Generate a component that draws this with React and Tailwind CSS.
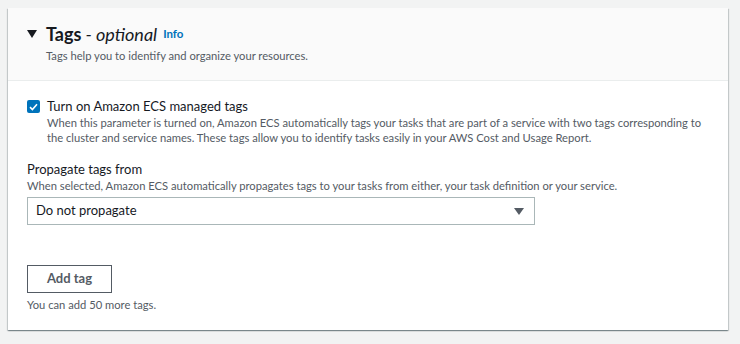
export default function App() {
  return (
    <div className="min-h-[344px] w-[740px] bg-[#f2f3f3] pt-2 pl-2 font-['Lato',sans-serif] text-[#16191f]">
      <div className="w-[720px] bg-white shadow-[0_1px_1px_0_rgba(0,28,36,0.3),1px_1px_1px_0_rgba(0,28,36,0.15),-1px_1px_1px_0_rgba(0,28,36,0.15)]">
        <div className="h-[73px] border-b border-[#eaeded] bg-[#fafafa] pl-[19px] pt-[14px]">
          <div className="flex items-center">
            <svg width="10" height="8" viewBox="0 0 10 8" className="mr-[9px]">
              <polygon points="0,0 10,0 5,8" fill="#16191f" />
            </svg>
            <span className="text-[18px] font-bold leading-[24px]">Tags</span>
            <span className="ml-[4px] text-[18px] italic leading-[24px]">- optional</span>
            <span className="ml-[6px] text-[11.5px] font-bold text-[#0073bb]">Info</span>
          </div>
          <p className="mt-[1px] pl-[19px] text-[11.2px] leading-[18px] text-[#545b64]">
            Tags help you to identify and organize your resources.
          </p>
        </div>
        <div className="px-[19px] pt-[16px] pb-[17px]">
          <label className="flex items-start gap-[7px]">
            <span className="mt-[3px] flex h-[13px] w-[13px] shrink-0 items-center justify-center rounded-[2px] bg-[#0073bb]">
              <svg width="9" height="8" viewBox="0 0 9 8">
                <path d="M1 4.2 L3.4 6.5 L8 1.3" stroke="white" strokeWidth="1.6" fill="none" />
              </svg>
            </span>
            <span>
              <span className="block text-[13px] leading-[18px]">Turn on Amazon ECS managed tags</span>
              <span className="block text-[11.2px] leading-[15px] text-[#545b64]">
                When this parameter is turned on, Amazon ECS automatically tags your tasks that are part of a service with two tags corresponding to the cluster and service names. These tags allow you to identify tasks easily in your AWS Cost and Usage Report.
              </span>
            </span>
          </label>
          <div className="mt-[15px]">
            <div className="text-[13px] leading-[18px]">Propagate tags from</div>
            <div className="text-[11.2px] leading-[16px] text-[#545b64]">
              When selected, Amazon ECS automatically propagates tags to your tasks from either, your task definition or your service.
            </div>
            <div className="mt-[3px] flex h-[28px] w-[508px] items-center justify-between border border-[#aab7b8] pl-[8px] pr-[10px] text-[13px]">
              <span>Do not propagate</span>
              <svg width="10" height="7" viewBox="0 0 10 7">
                <polygon points="0,0 10,0 5,7" fill="#545b64" />
              </svg>
            </div>
          </div>
          <button className="mt-[40px] flex h-[28px] w-[85px] items-center justify-center border border-[#545b64] bg-white text-[13px] font-bold text-[#545b64]">
            Add tag
          </button>
          <p className="mt-[4px] text-[11.2px] leading-[16px] text-[#545b64]">You can add 50 more tags.</p>
        </div>
      </div>
    </div>
  )
}
